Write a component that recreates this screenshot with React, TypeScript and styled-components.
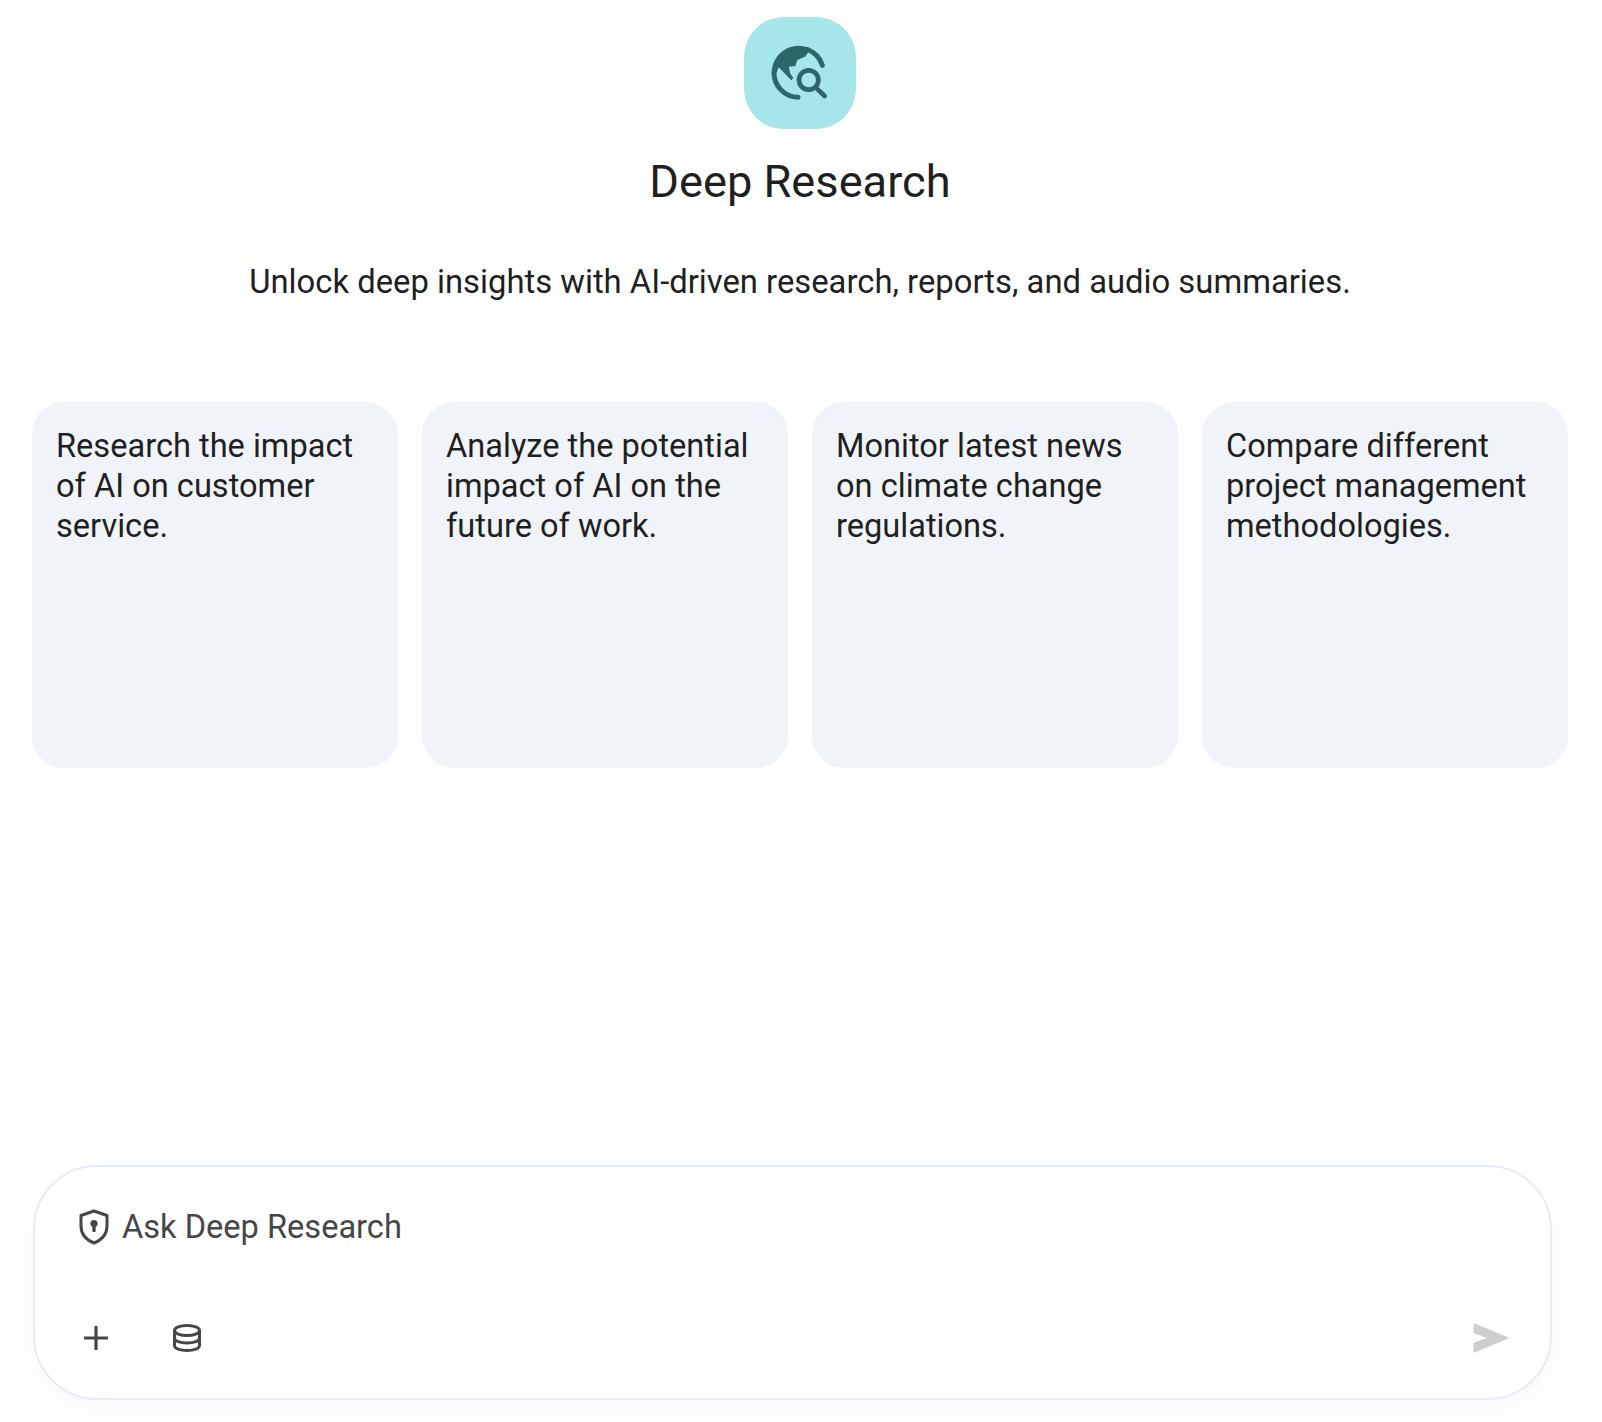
import React from "react";
import styled, { createGlobalStyle } from "styled-components";

const Global = createGlobalStyle`
  html, body { margin: 0; padding: 0; background: #fff; }
  body { font-family: "Roboto", "Liberation Sans", sans-serif; color: #1f1f1f; }
`;

const Page = styled.main`
  width: 1602px;
  height: 1422px;
  box-sizing: border-box;
  padding: 17px 34px 0 32px;
  display: flex;
  flex-direction: column;
  overflow: hidden;
`;

const Hero = styled.header`
  width: 1600px;
  margin-left: -32px;
  display: flex;
  flex-direction: column;
  align-items: center;
`;

const Badge = styled.div`
  width: 112px;
  height: 112px;
  border-radius: 40px;
  background: #a6e5e9;
  display: flex;
  align-items: center;
  justify-content: center;
`;

const Title = styled.h1`
  margin: 25px 0 0;
  font-size: 45.2px;
  line-height: 56px;
  font-weight: 400;
  letter-spacing: 0;
`;

const Subtitle = styled.p`
  margin: 52px 0 0;
  font-size: 32.8px;
  line-height: 40px;
  font-weight: 400;
`;

const Cards = styled.section`
  margin-top: 100px;
  display: grid;
  grid-template-columns: repeat(4, 366px);
  gap: 24px;
`;

const Card = styled.button`
  height: 366px;
  box-sizing: border-box;
  border: 0;
  border-radius: 32px;
  background: #f0f4f9;
  padding: 24px;
  font: 400 32.6px/40px "Roboto", "Liberation Sans", sans-serif;
  color: #1f1f1f;
  text-align: left;
  display: block;
`;

const CardText = styled.span`
  display: block;
  height: 100%;
`;

const Composer = styled.section`
  margin: 397px 0 0 1px;
  width: 1519px;
  height: 235px;
  box-sizing: border-box;
  border: 2px solid #e6ebf6;
  border-radius: 64px;
  background: #fff;
  box-shadow: 0 8px 24px rgba(200, 208, 235, 0.18);
  padding: 40px 38px 0 44px;
  display: flex;
  flex-direction: column;
`;

const Prompt = styled.div`
  display: flex;
  align-items: center;
  gap: 13px;
  height: 40px;
  font-size: 32.6px;
  line-height: 40px;
  color: #444746;
`;

const Toolbar = styled.div`
  margin: 76px 3px 0 5px;
  display: flex;
  align-items: center;
`;

const ToolIcon = styled.span<{ $gap?: number }>`
  display: flex;
  margin-right: ${(p) => p.$gap ?? 0}px;
`;

const Spacer = styled.div`
  flex: 1;
`;

const cards = [
  "Research the impact of AI on customer service.",
  "Analyze the potential impact of AI on the future of work.",
  "Monitor latest news on climate change regulations.",
  "Compare different project management methodologies.",
];

const GlobeIcon = () => (
  <svg width="60" height="60" viewBox="150 99 180 180" fill="none">
    <path d="M307 166 A74 74 0 0 0 262 118.500 M162 188 A74 74 0 0 0 234 262" stroke="#2b6668" strokeWidth="15" strokeLinecap="round" />
    <path d="M268 114 A81 81 0 0 0 155 188 L170 188 L176 172 L214 211 L220 203 L210 190 L207 170 L226 168 L232 150 L255 140 L268 122 Z" fill="#2b6668" />
    <circle cx="266" cy="210" r="29" stroke="#2b6668" strokeWidth="14" />
    <path d="M290 235 L314 258" stroke="#2b6668" strokeWidth="14" strokeLinecap="round" />
  </svg>
);

const ShieldIcon = () => (
  <svg width="30" height="36" viewBox="0 0 30 36" fill="none">
    <path d="M15 2 L28 6.500 V17 C28 25 22.500 31 15 34 C7.500 31 2 25 2 17 V6.500 Z" stroke="#444746" strokeWidth="3" strokeLinejoin="round" />
    <circle cx="15" cy="14.500" r="3.600" fill="#444746" />
    <rect x="13.300" y="15" width="3.400" height="8" rx="1" fill="#444746" />
  </svg>
);

const PlusIcon = () => (
  <svg width="24" height="24" viewBox="0 0 24 24" fill="none">
    <path d="M12 1 V23 M1 12 H23" stroke="#444746" strokeWidth="3.200" strokeLinecap="round" />
  </svg>
);

const StackIcon = () => (
  <svg width="28" height="28" viewBox="0 0 28 28" fill="none" stroke="#444746" strokeWidth="3">
    <ellipse cx="14" cy="6.500" rx="12.500" ry="5" />
    <path d="M1.500 6.500 V21.500 C1.500 24.500 7 26.500 14 26.500 C21 26.500 26.500 24.500 26.500 21.500 V6.500" />
    <path d="M1.500 14 C1.500 17 7 19 14 19 C21 19 26.500 17 26.500 14" />
  </svg>
);

const SendIcon = () => (
  <svg width="36" height="30" viewBox="216 158 110 92">
    <path d="M220 162 L322 204 L220 246 V220 L268 204 L220 188 Z" fill="#cdcfce" stroke="#cdcfce" strokeWidth="5" strokeLinejoin="round" />
  </svg>
);

export default function App() {
  return (
    <Page>
      <Global />
      <Hero>
        <Badge>
          <GlobeIcon />
        </Badge>
        <Title>Deep Research</Title>
        <Subtitle>Unlock deep insights with AI-driven research, reports, and audio summaries.</Subtitle>
      </Hero>
      <Cards>
        {cards.map((c) => (
          <Card key={c}>
            <CardText>{c}</CardText>
          </Card>
        ))}
      </Cards>
      <Composer>
        <Prompt>
          <ShieldIcon />
          <span>Ask Deep Research</span>
        </Prompt>
        <Toolbar>
          <ToolIcon $gap={65}><PlusIcon /></ToolIcon>
          <ToolIcon><StackIcon /></ToolIcon>
          <Spacer />
          <ToolIcon><SendIcon /></ToolIcon>
        </Toolbar>
      </Composer>
    </Page>
  );
}
